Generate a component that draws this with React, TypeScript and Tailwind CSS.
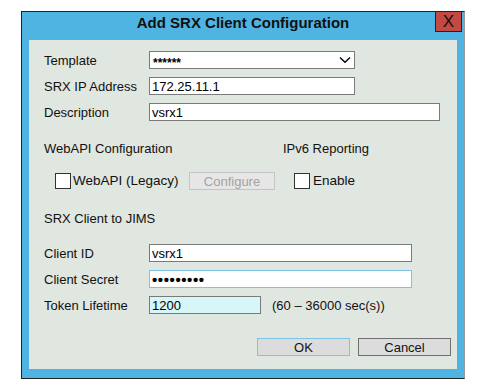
import React from "react";

const font = { fontFamily: '"Liberation Sans", Arial, sans-serif' };

function Field({ value, width, className = "" }: { value: React.ReactNode; width: string; className?: string }) {
  return (
    <div
      className={`h-[18px] ${width} border flex items-center pl-[2px] text-[13px] leading-none text-black ${className}`}
    >
      {value}
    </div>
  );
}

function Row({ label, children }: { label: string; children: React.ReactNode }) {
  return (
    <div className="flex items-center h-[18px]">
      <div className="w-[105px] text-[13px] leading-[15px] text-[#111]">{label}</div>
      {children}
    </div>
  );
}

function Checkbox() {
  return <div className="w-[16px] h-[16px] border border-[#333] bg-white shrink-0" />;
}

export default function App() {
  return (
    <div className="min-h-screen bg-white pl-[21px] pt-[11px]" style={font}>
      <div className="w-[444px] h-[368px] border border-[#222] border-r-[#9a9a9a] bg-[#4fb4e2] flex flex-col">
        {/* title bar */}
        <div className="relative h-[28px] flex justify-center pt-[2px]">
          <span className="text-[15px] leading-[17px] font-bold text-[#111]">Add SRX Client Configuration</span>
          <div className="absolute top-[-1px] right-[2px] w-[27px] h-[21px] bg-[#c24a42] border border-[#222] flex items-center justify-center">
            <span className="text-[17px] leading-none text-[#111]">X</span>
          </div>
        </div>

        {/* body */}
        <div className="flex-1 px-[7px] pb-[9px] flex">
          <div className="flex-1 bg-[#e0e6e0] pl-[15px] pr-[6px] pt-[11px] flex flex-col">
            <div className="flex flex-col gap-[8px]">
              <Row label="Template">
                <div className="h-[18px] w-[206px] border border-[#7a7a7a] bg-white flex items-center justify-between pl-[3px] pr-[3px]">
                  <span className="text-[12px] font-bold leading-none pt-[5px] text-black">******</span>
                  <svg width="12" height="8" viewBox="0 0 12 8">
                    <path d="M1 1.5 L6 6.2 L11 1.5" fill="none" stroke="#000" strokeWidth="1.4" />
                  </svg>
                </div>
              </Row>
              <Row label="SRX IP Address">
                <Field value="172.25.11.1" width="w-[206px]" className="border-[#7a7a7a] bg-white" />
              </Row>
              <Row label="Description">
                <Field value="vsrx1" width="w-[291px]" className="border-[#7a7a7a] bg-white" />
              </Row>
            </div>

            <div className="mt-[20px] flex text-[13px] leading-[15px] text-[#111]">
              <div className="w-[239px]">WebAPI Configuration</div>
              <div>IPv6 Reporting</div>
            </div>

            <div className="mt-[16px] h-[18px] flex items-center text-[13.5px] leading-none text-[#111]">
              <div className="w-[134px] ml-[11px] flex items-center">
                <Checkbox />
                <span className="ml-[2px]">WebAPI (Legacy)</span>
              </div>
              <div className="w-[86px] h-[18px] border border-[#c4c4c4] bg-[#e6e6e6] flex items-center justify-center text-[13px] text-[#a3a3a3]">
                Configure
              </div>
              <div className="ml-[19px] flex items-center">
                <Checkbox />
                <span className="ml-[3px]">Enable</span>
              </div>
            </div>

            <div className="mt-[21px] text-[13px] leading-[15px] text-[#111]">SRX Client to JIMS</div>

            <div className="mt-[18px] flex flex-col gap-[8px]">
              <Row label="Client ID">
                <Field value="vsrx1" width="w-[263px]" className="border-[#7a7a7a] bg-white" />
              </Row>
              <Row label="Client Secret">
                <Field
                  value={<span className="text-[15px] tracking-[0.6px] font-bold">•••••••••</span>}
                  width="w-[263px]"
                  className="border-[#7cc3e6] bg-white"
                />
              </Row>
              <Row label="Token Lifetime">
                <Field value="1200" width="w-[112px]" className="border-[#7a7a7a] bg-[#d6f6f8]" />
                <span className="ml-[11px] text-[13px] leading-none text-[#111]">(60 – 36000 sec(s))</span>
              </Row>
            </div>

            <div className="mt-[24px] flex justify-end gap-[8px]">
              <div className="w-[93px] h-[18px] border border-[#7cc3e6] bg-[#dcdcdc] flex items-center justify-center text-[13px] leading-none text-[#111]">
                OK
              </div>
              <div className="w-[93px] h-[18px] border border-[#707070] bg-[#dcdcdc] flex items-center justify-center text-[13px] leading-none text-[#111]">
                Cancel
              </div>
            </div>
          </div>
        </div>
      </div>
    </div>
  );
}
